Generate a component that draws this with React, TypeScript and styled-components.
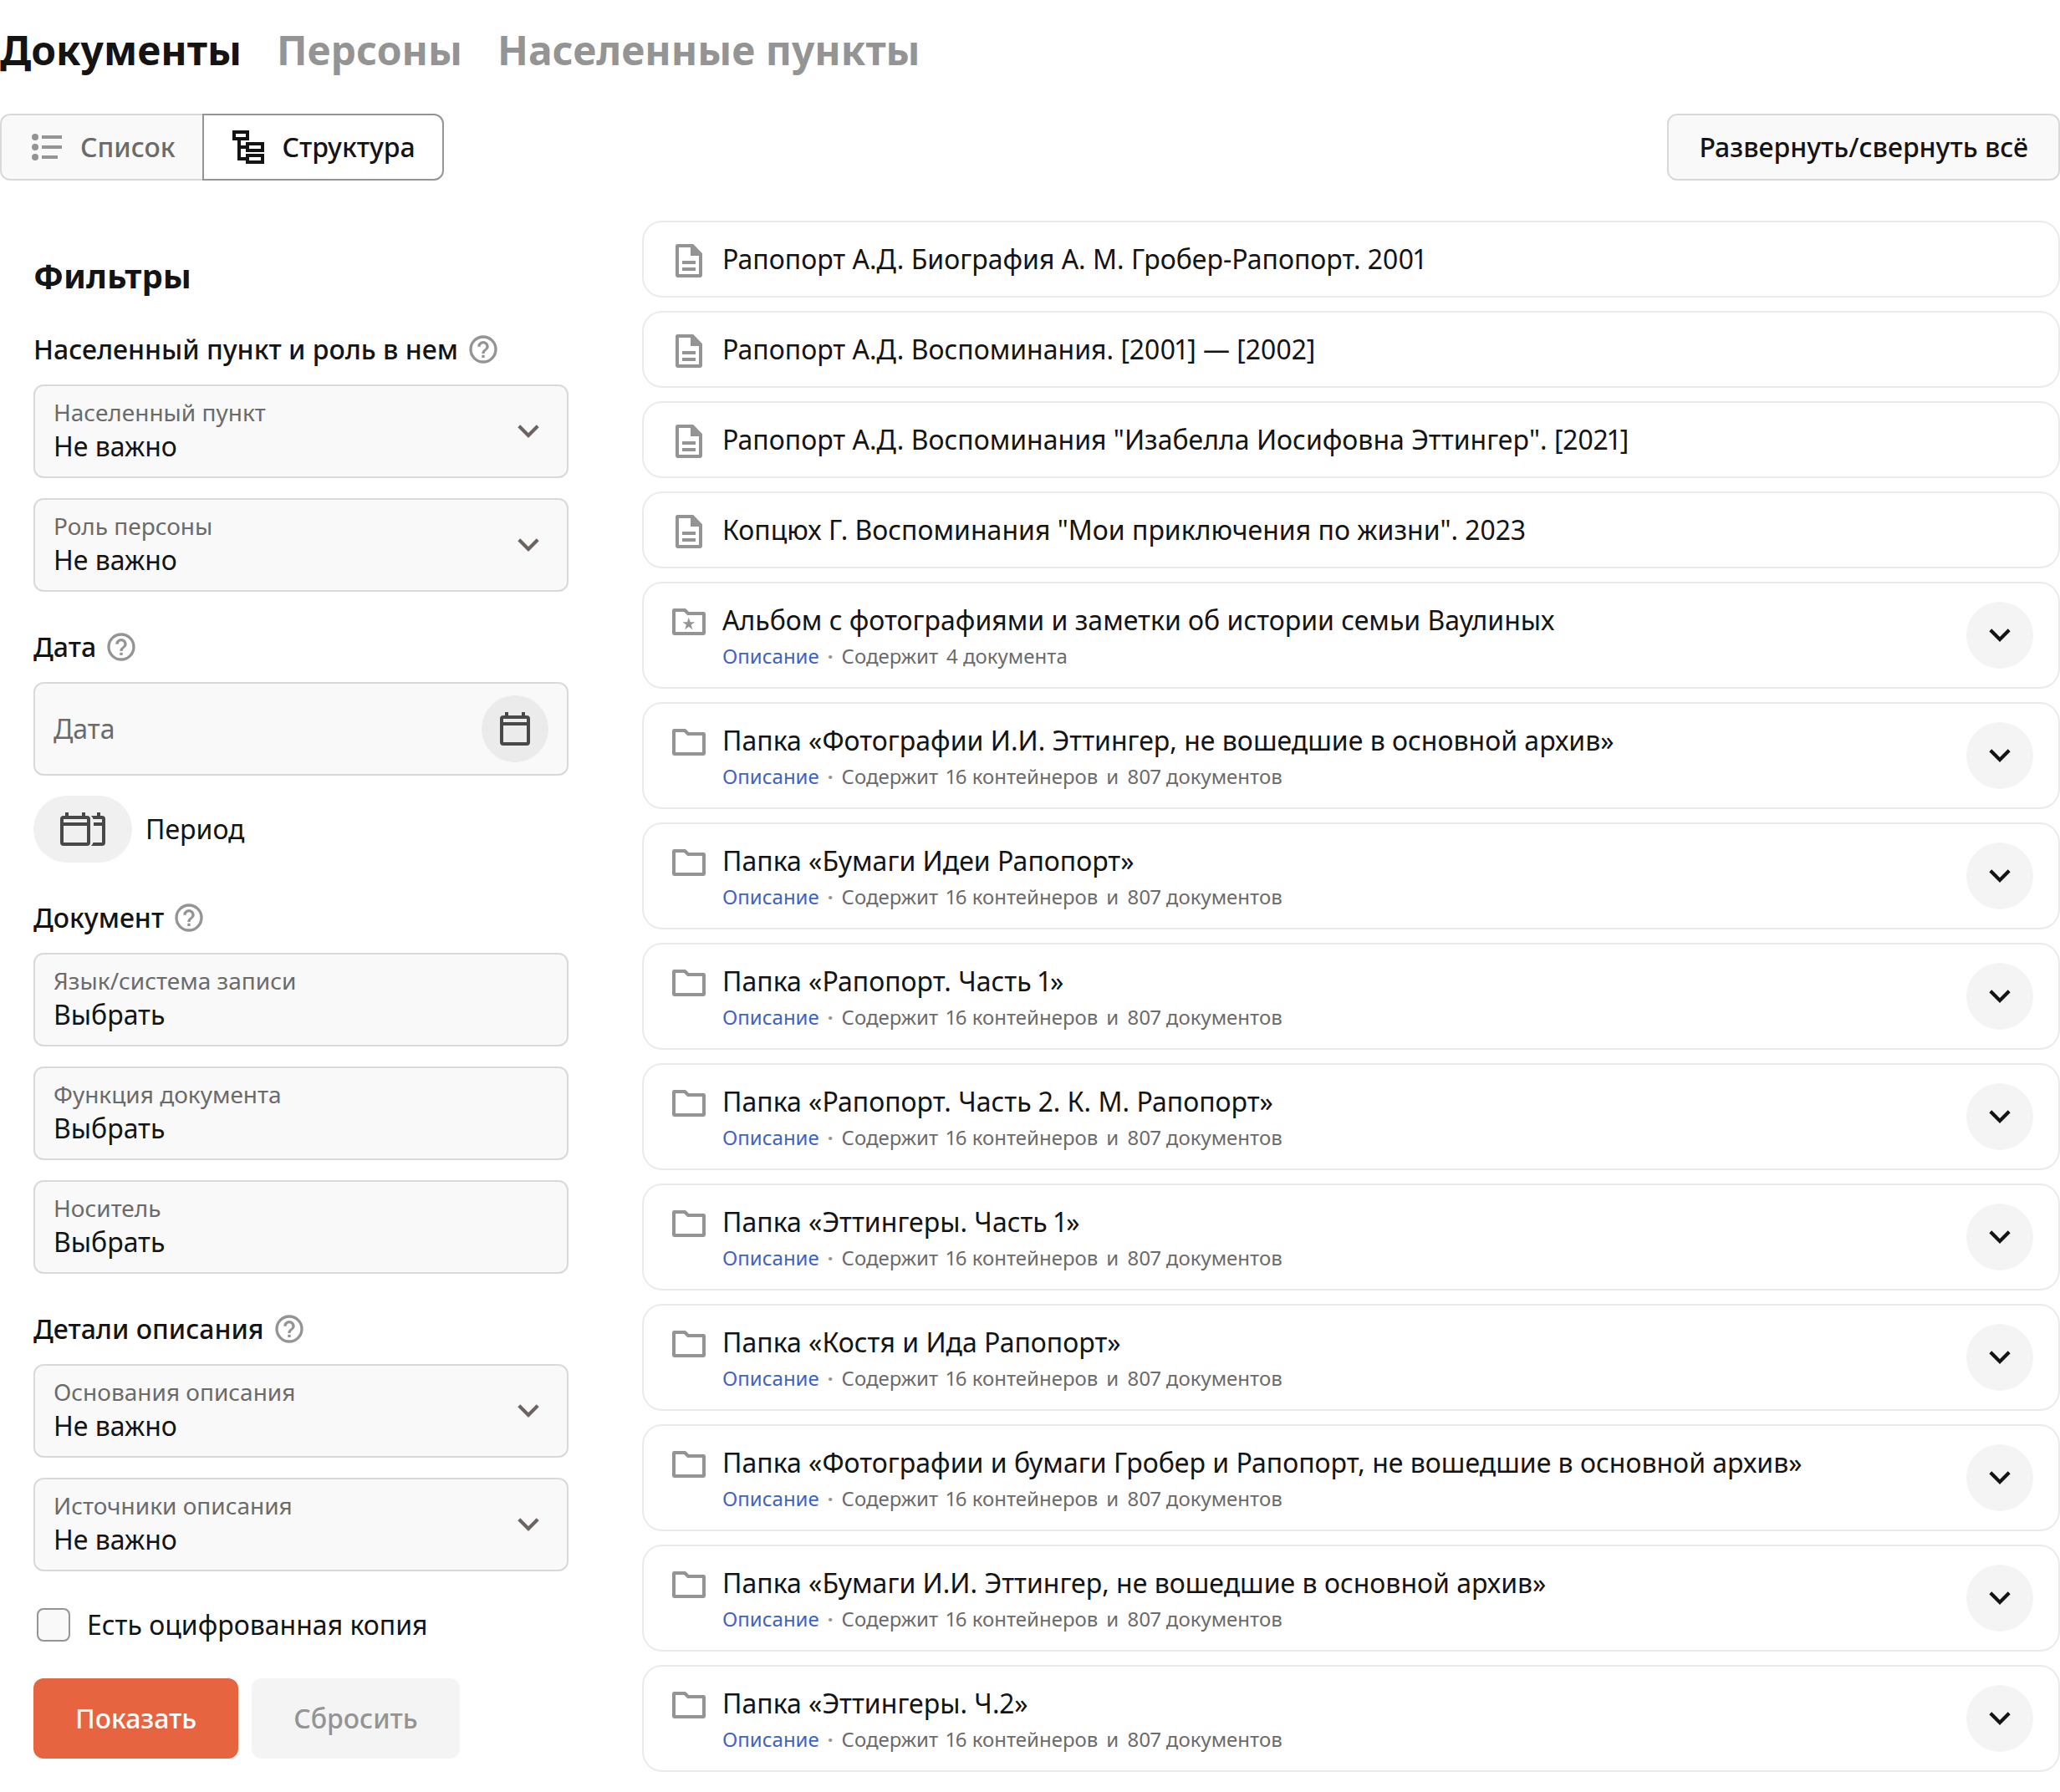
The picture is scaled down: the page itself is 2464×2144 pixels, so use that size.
import React from "react";
import styled, { createGlobalStyle } from "styled-components";

const color = {
  text: "#141414",
  secondary: "#6b6b6b",
  muted: "#949494",
  line: "#d9d9d9",
  lineSoft: "#ebebeb",
  field: "#f9f9f9",
  disabled: "#f4f4f4",
  link: "#3f63c4",
  accent: "#e66440",
  icon: "#484848",
  arrow: "#6e6363",
};

const GlobalStyle = createGlobalStyle`
  *, *::before, *::after { box-sizing: border-box; }
  body {
    margin: 0;
    background: #fff;
    color: ${color.text};
    font-family: "Noto Sans", "Open Sans", sans-serif;
    font-size: 32px;
    line-height: 44px;
    font-variant-numeric: proportional-nums;
  }
  button, input, select {
    font: inherit;
    font-variant-numeric: inherit;
    color: inherit;
    margin: 0;
  }
  button { cursor: pointer; }
`;

const Page = styled.div`
  padding: 28px 0 24px;
`;

const Tabs = styled.nav`
  display: flex;
  gap: 42px;
  margin-bottom: 44px;
`;

const Tab = styled.a<{ $active?: boolean }>`
  font-size: 48px;
  line-height: 64px;
  font-weight: 700;
  text-decoration: none;
  color: ${(p) => (p.$active ? color.text : color.muted)};
`;

const Toolbar = styled.div`
  display: flex;
  justify-content: space-between;
  margin-bottom: 48px;
`;

const Toggle = styled.div`
  display: flex;
`;

const ToggleButton = styled.button<{ $active?: boolean }>`
  display: flex;
  align-items: center;
  gap: 16px;
  height: 80px;
  padding: 0 32px 0 30px;
  font-weight: 500;
  border: 2px solid ${(p) => (p.$active ? color.muted : color.line)};
  background: ${(p) => (p.$active ? "#fff" : color.field)};
  color: ${(p) => (p.$active ? color.text : color.secondary)};

  &:first-child {
    border-right: 0;
    border-radius: 12px 0 0 12px;
  }
  &:last-child {
    border-radius: 0 12px 12px 0;
  }
`;

const OutlineButton = styled.button`
  height: 80px;
  padding: 0 36px;
  font-weight: 500;
  border: 2px solid ${color.line};
  border-radius: 12px;
  background: ${color.field};
`;

const Columns = styled.div`
  display: flex;
  align-items: flex-start;
  gap: 48px;
`;

const Sidebar = styled.form`
  flex: 0 0 720px;
  display: flex;
  flex-direction: column;
  gap: 44px;
  padding: 40px 40px 0;
`;

const SidebarHead = styled.div`
  display: flex;
  flex-direction: column;
  gap: 40px;
`;

const SidebarTitle = styled.h2`
  margin: 0;
  font-size: 40px;
  line-height: 52px;
  font-weight: 700;
`;

const Section = styled.fieldset`
  margin: 0;
  padding: 0;
  border: 0;
  min-width: 0;
`;

const SectionTitle = styled.legend`
  display: flex;
  align-items: center;
  gap: 10px;
  height: 44px;
  padding: 0;
  margin-bottom: 20px;
  font-weight: 500;
`;

const HelpButton = styled.button`
  display: flex;
  padding: 0;
  border: 0;
  background: none;
  color: ${color.muted};
`;

const Fields = styled.div`
  display: flex;
  flex-direction: column;
  gap: 24px;
`;

const FieldBox = styled.div`
  display: flex;
  align-items: center;
  height: 112px;
  padding: 0 22px;
  border: 2px solid ${color.line};
  border-radius: 12px;
  background: ${color.field};
  color: ${color.arrow};
`;

const FieldText = styled.div`
  flex: 1;
  min-width: 0;
  display: flex;
  flex-direction: column;
  gap: 1px;
  padding-bottom: 1px;
`;

const FieldLabel = styled.label`
  font-size: 28px;
  line-height: 36px;
  color: ${color.secondary};
`;

const Select = styled.select`
  appearance: none;
  width: 100%;
  height: 44px;
  padding: 0;
  border: 0;
  background: none;
  color: ${color.text};
`;

const TextInput = styled.input<{ $dim?: boolean }>`
  width: 100%;
  min-width: 0;
  height: 44px;
  padding: 0;
  border: 0;
  background: none;
  color: ${color.text};
  &::placeholder {
    opacity: 1;
    color: ${(p) => (p.$dim ? color.secondary : color.text)};
  }
`;

const RoundButton = styled.button<{ $tone: string; $fg: string }>`
  flex: none;
  display: flex;
  align-items: center;
  justify-content: center;
  width: 80px;
  height: 80px;
  padding: 0;
  border: 0;
  border-radius: 50%;
  background: ${(p) => p.$tone};
  color: ${(p) => p.$fg};
`;

const PeriodRow = styled.div`
  display: flex;
  align-items: center;
  gap: 16px;
`;

const PeriodButton = styled.button`
  display: flex;
  align-items: center;
  height: 80px;
  padding: 0 32px;
  border: 0;
  border-radius: 40px;
  background: #f0f0f0;
  color: ${color.icon};
`;

const CheckRow = styled.label`
  display: flex;
  align-items: center;
  gap: 20px;
  height: 40px;
  padding-left: 4px;
`;

const Checkbox = styled.input`
  appearance: none;
  width: 40px;
  height: 40px;
  margin: 0;
  border: 2px solid ${color.muted};
  border-radius: 8px;
  background: ${color.field};
  &:checked { background: ${color.accent}; }
`;

const Actions = styled.div`
  display: flex;
  gap: 16px;
`;

const ActionButton = styled.button<{ $primary?: boolean }>`
  height: 96px;
  padding: 0 50px;
  border: 0;
  border-radius: 12px;
  font-weight: 500;
  background: ${(p) => (p.$primary ? color.accent : color.disabled)};
  color: ${(p) => (p.$primary ? "#fff" : color.muted)};
`;

const List = styled.ul`
  flex: 1;
  min-width: 0;
  display: flex;
  flex-direction: column;
  gap: 16px;
  margin: 0;
  padding: 0;
  list-style: none;
`;

const Row = styled.li`
  display: flex;
  align-items: flex-start;
  gap: 16px;
  padding: 22px 30px 18px;
  border: 2px solid ${color.lineSoft};
  border-radius: 24px;
`;

const RowIcon = styled.span`
  flex: none;
  display: flex;
  color: ${color.muted};
`;

const RowBody = styled.div`
  flex: 1;
  min-width: 0;
  padding-bottom: 2px;
`;

const RowTitle = styled.div``;

const Meta = styled.div`
  display: flex;
  gap: 10px;
  margin-top: 4px;
  font-size: 24px;
  line-height: 34px;
  color: ${color.secondary};
`;

const MetaLink = styled.a`
  color: ${color.link};
  text-decoration: none;
`;

const Dot = styled.span`
  font-weight: 700;
  color: ${color.muted};
`;

const Svg = styled.svg`
  display: block;
  flex: none;
`;

const ListIcon = () => (
  <Svg width="48" height="48" viewBox="0 0 48 48" fill={color.muted} aria-hidden>
    <circle cx="10" cy="12" r="4" />
    <circle cx="10" cy="24" r="4" />
    <circle cx="10" cy="36" r="4" />
    <path d="M18 10h24v4H18zM18 22h24v4H18zM18 34h19v4H18z" />
  </Svg>
);

const TreeIcon = () => (
  <Svg width="48" height="48" viewBox="0 0 48 48" fill="none" stroke="currentColor" strokeWidth="4" aria-hidden>
    <path d="M6 6h16v8H6zM22 20h18v8H22zM22 34h18v8H22zM12 14v24h10M12 24h10" />
  </Svg>
);

const HelpIcon = () => (
  <Svg width="40" height="40" viewBox="0 0 24 24" fill="currentColor" aria-hidden>
    <path d="M11 16h2v2h-2zM12 2a10 10 0 1 0 0 20 10 10 0 0 0 0-20zm0 18a8 8 0 1 1 0-16 8 8 0 0 1 0 16zm0-14c-2.210 0-4 1.790-4 4h2c0-1.100.9-2 2-2s2 .9 2 2c0 2-3 1.750-3 5h2c0-2.250 3-2.500 3-5 0-2.210-1.790-4-4-4z" />
  </Svg>
);

const Chevron = () => (
  <Svg width="48" height="48" viewBox="0 0 24 24" fill="none" stroke="currentColor" strokeWidth="2.1" aria-hidden>
    <path d="M6.400 8.900 12 14.500l5.600-5.600" />
  </Svg>
);

const CalendarIcon = () => (
  <Svg width="48" height="48" viewBox="0 0 48 48" fill="none" stroke="currentColor" strokeWidth="4" aria-hidden>
    <rect x="8" y="10" width="32" height="32" rx="2" />
    <path d="M8 18h32M14 4v6M34 4v6" />
  </Svg>
);

const PeriodIcon = () => (
  <Svg width="54" height="48" viewBox="0 0 54 48" fill="none" stroke="currentColor" strokeWidth="4" aria-hidden>
    <rect x="2" y="10" width="32" height="32" rx="2" />
    <path d="M2 18h32M8 4v6M28 4v6M46 4v6M40 18h12" />
    <path
      d="M37 8h13a4 4 0 0 1 4 4v28a4 4 0 0 1-4 4H37q2-2 2.500-4H50V12H39.500Q39 10 37 8z"
      fill="currentColor"
      stroke="none"
    />
  </Svg>
);

const DocumentIcon = () => (
  <Svg width="48" height="48" viewBox="0 0 24 24" fill="currentColor" fillRule="evenodd" aria-hidden>
    <path d="M14.600 2H5.200A1.200 1.200 0 0 0 4 3.200v17.600A1.200 1.200 0 0 0 5.200 22h13.600a1.200 1.200 0 0 0 1.200-1.200V7.600zM6 20V4h7v5h5v11zM8 12h8v2H8zM8 16h8v2H8z" />
  </Svg>
);

const FolderIcon = ({ star }: { star?: boolean }) => (
  <Svg width="48" height="48" viewBox="0 0 24 24" fill="currentColor" fillRule="evenodd" aria-hidden>
    <path d="M3.200 4H9.500q.5 0 .8.300L12 6h8.800A1.200 1.200 0 0 1 22 7.200v11.600a1.200 1.200 0 0 1-1.200 1.200H3.200A1.200 1.200 0 0 1 2 18.800V5.200A1.200 1.200 0 0 1 3.200 4zM4 6v12h16V8h-8.900l-2-2z" />
    {star && (
      <path d="M11.900 9.400l.9 2.700 2.800 0-2.250 1.700.85 2.800-2.300-1.700-2.300 1.700.85-2.800-2.250-1.700 2.800 0z" />
    )}
  </Svg>
);

const Help = ({ topic }: { topic: string }) => (
  <HelpButton type="button" aria-label={topic}>
    <HelpIcon />
  </HelpButton>
);

const FilterSection = ({ title, children }: { title: string; children: React.ReactNode }) => (
  <Section>
    <SectionTitle>
      {title}
      <Help topic={title} />
    </SectionTitle>
    <Fields>{children}</Fields>
  </Section>
);

const SelectField = ({ id, label }: { id: string; label: string }) => (
  <FieldBox>
    <FieldText>
      <FieldLabel htmlFor={id}>{label}</FieldLabel>
      <Select id={id}>
        <option>Не важно</option>
      </Select>
    </FieldText>
    <Chevron />
  </FieldBox>
);

const PickField = ({ id, label }: { id: string; label: string }) => (
  <FieldBox>
    <FieldText>
      <FieldLabel htmlFor={id}>{label}</FieldLabel>
      <TextInput id={id} placeholder="Выбрать" />
    </FieldText>
  </FieldBox>
);

const documents = [
  "Рапопорт А.Д. Биография А. М. Гробер-Рапопорт. 2001",
  "Рапопорт А.Д. Воспоминания. [2001] — [2002]",
  'Рапопорт А.Д. Воспоминания "Изабелла Иосифовна Эттингер". [2021]',
  'Копцюх Г. Воспоминания "Мои приключения по жизни". 2023',
];

type Folder = { title: string; star?: boolean; counts: string[] };

const common = ["16 контейнеров", "807 документов"];

const folders: Folder[] = [
  { title: "Альбом с фотографиями и заметки об истории семьи Ваулиных", star: true, counts: ["4 документа"] },
  { title: "Папка «Фотографии И.И. Эттингер, не вошедшие в основной архив»", counts: common },
  { title: "Папка «Бумаги Идеи Рапопорт»", counts: common },
  { title: "Папка «Рапопорт. Часть 1»", counts: common },
  { title: "Папка «Рапопорт. Часть 2. К. М. Рапопорт»", counts: common },
  { title: "Папка «Эттингеры. Часть 1»", counts: common },
  { title: "Папка «Костя и Ида Рапопорт»", counts: common },
  { title: "Папка «Фотографии и бумаги Гробер и Рапопорт, не вошедшие в основной архив»", counts: common },
  { title: "Папка «Бумаги И.И. Эттингер, не вошедшие в основной архив»", counts: common },
  { title: "Папка «Эттингеры. Ч.2»", counts: common },
];

const FolderRow = ({ title, star, counts }: Folder) => (
  <Row>
    <RowIcon>
      <FolderIcon star={star} />
    </RowIcon>
    <RowBody>
      <RowTitle>{title}</RowTitle>
      <Meta>
        <MetaLink href="#">Описание</MetaLink>
        <Dot>·</Dot>
        <span>Содержит</span>
        <span>{counts[0]}</span>
        {counts[1] && <span>и</span>}
        {counts[1] && <span>{counts[1]}</span>}
      </Meta>
    </RowBody>
    <RoundButton type="button" aria-label={title} $tone={color.disabled} $fg={color.text}>
      <Chevron />
    </RoundButton>
  </Row>
);

export default function App() {
  return (
    <>
      <GlobalStyle />
      <Page>
        <Tabs>
          <Tab href="#" $active>
            Документы
          </Tab>
          <Tab href="#">Персоны</Tab>
          <Tab href="#">Населенные пункты</Tab>
        </Tabs>
        <Toolbar>
          <Toggle>
            <ToggleButton type="button">
              <ListIcon />
              Список
            </ToggleButton>
            <ToggleButton type="button" $active>
              <TreeIcon />
              Структура
            </ToggleButton>
          </Toggle>
          <OutlineButton type="button">Развернуть/свернуть всё</OutlineButton>
        </Toolbar>
        <Columns>
          <Sidebar onSubmit={(e) => e.preventDefault()}>
            <SidebarHead>
              <SidebarTitle>Фильтры</SidebarTitle>
              <FilterSection title="Населенный пункт и роль в нем">
                <SelectField id="place" label="Населенный пункт" />
                <SelectField id="role" label="Роль персоны" />
              </FilterSection>
            </SidebarHead>
            <FilterSection title="Дата">
              <FieldBox>
                <TextInput $dim aria-label="Дата" placeholder="Дата" />
                <RoundButton type="button" aria-label="Дата" $tone={color.lineSoft} $fg={color.icon}>
                  <CalendarIcon />
                </RoundButton>
              </FieldBox>
              <PeriodRow>
                <PeriodButton type="button" id="period">
                  <PeriodIcon />
                </PeriodButton>
                <label htmlFor="period">Период</label>
              </PeriodRow>
            </FilterSection>
            <FilterSection title="Документ">
              <PickField id="language" label="Язык/система записи" />
              <PickField id="function" label="Функция документа" />
              <PickField id="medium" label="Носитель" />
            </FilterSection>
            <FilterSection title="Детали описания">
              <SelectField id="grounds" label="Основания описания" />
              <SelectField id="sources" label="Источники описания" />
            </FilterSection>
            <CheckRow>
              <Checkbox type="checkbox" />
              Есть оцифрованная копия
            </CheckRow>
            <Actions>
              <ActionButton type="submit" $primary>
                Показать
              </ActionButton>
              <ActionButton type="reset">Сбросить</ActionButton>
            </Actions>
          </Sidebar>
          <List>
            {documents.map((title) => (
              <Row key={title}>
                <RowIcon>
                  <DocumentIcon />
                </RowIcon>
                <RowTitle>{title}</RowTitle>
              </Row>
            ))}
            {folders.map((folder) => (
              <FolderRow key={folder.title} {...folder} />
            ))}
          </List>
        </Columns>
      </Page>
    </>
  );
}
